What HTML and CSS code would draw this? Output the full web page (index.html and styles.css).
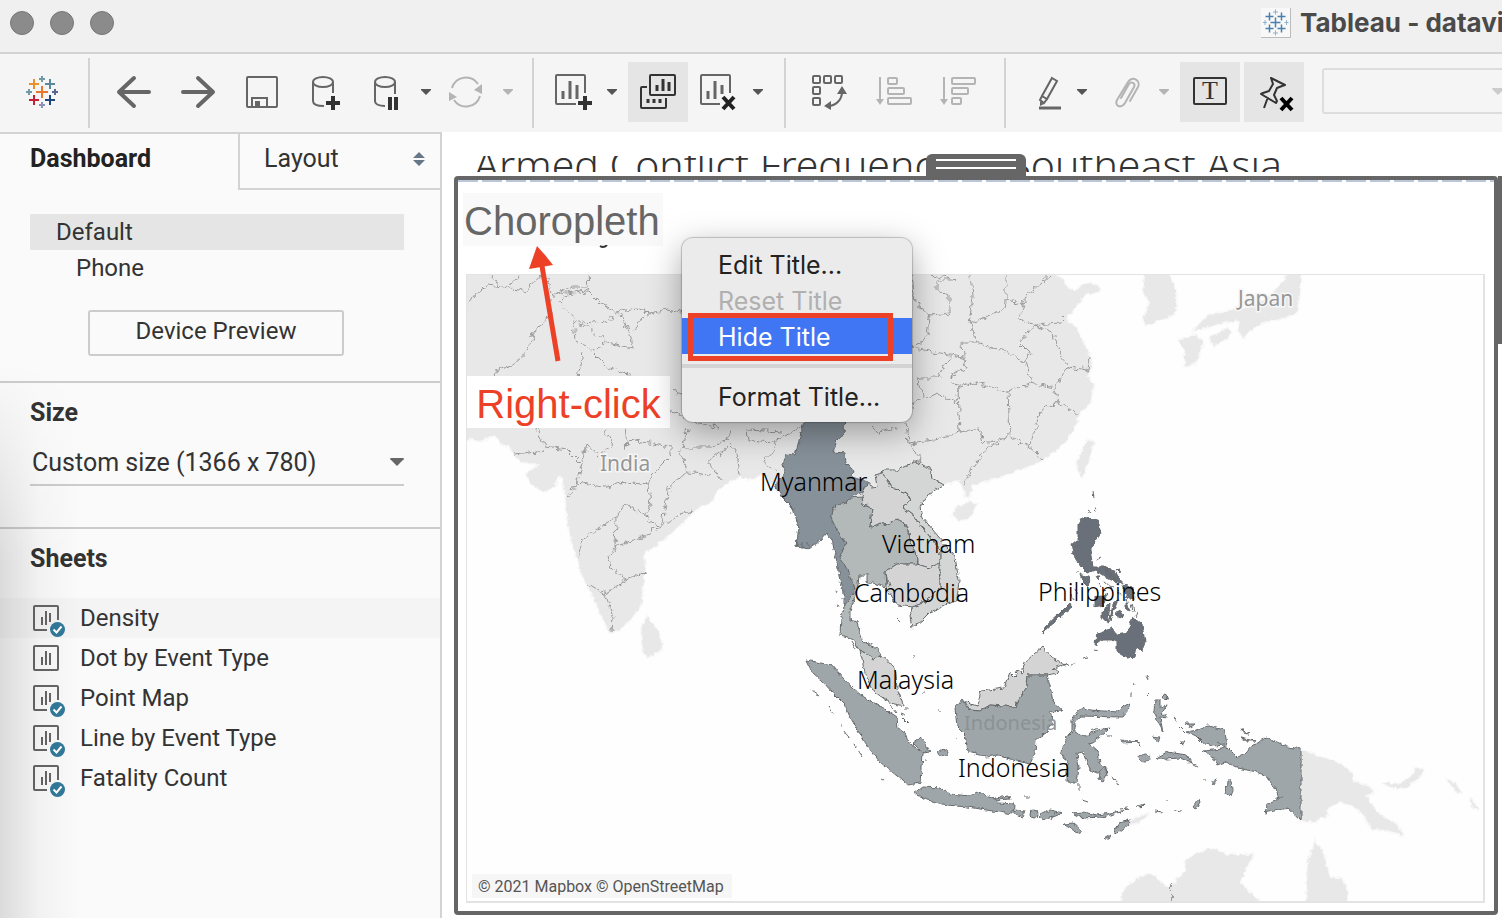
FILE: index.html
```html
<!DOCTYPE html>
<html lang="en">
<head>
<meta charset="utf-8">
<title>Tableau</title>
<link rel="stylesheet" href="styles.css">
</head>
<body>
<svg class="defs" aria-hidden="true">
  <symbol id="caret" viewBox="0 0 10 6"><path d="M0 0h10v1L5 6 0 1z" fill="currentColor"/></symbol>
  <symbol id="sheet" viewBox="0 0 34 34"><rect x="2" y="3" width="24" height="24" rx="1" fill="none" stroke="#666" stroke-width="2"/><path d="M10 14v8M14 8v14M18 10v12" stroke="#666" stroke-width="2"/></symbol>
  <symbol id="sheet-used" viewBox="0 0 34 34"><path d="M15 27H3a1 1 0 0 1-1-1V4a1 1 0 0 1 1-1h22a1 1 0 0 1 1 1v13" fill="none" stroke="#666" stroke-width="2"/><path d="M10 14v8M14 8v14M18 10v9" stroke="#666" stroke-width="2"/><circle cx="25.500" cy="26.500" r="7.500" fill="#32799a"/><path d="M21.500 26.500l3 3 5-6" fill="none" stroke="#fff" stroke-width="2"/></symbol>
</svg>

<header class="titlebar">
  <div class="lights"><i class="light"></i><i class="light"></i><i class="light"></i></div>
  <div class="window-title">
    <svg class="doc-icon" viewBox="0 0 30 30" fill="none" stroke="#4b80ae"><rect x="0" y="0" width="30" height="30" fill="#f8f8f8" stroke="none"/><path d="M29.500 0v29.500H0" stroke="#bbb"/><path d="M14.500 9.500v10M9.500 14.500h10M8.500 4.500v8M4.500 8.500h8M20.500 4.500v8M16.500 8.500h8M8.500 16.500v8M4.500 20.500h8M20.500 16.500v8M16.500 20.500h8" stroke-width="1.500"/><path d="M14.500 1.500v5M12 4h5M14.500 22.500v5M12 25h5M4 12v5M2 14.500h4M25.500 12v5M23.500 14.500h4" stroke="#8fb3cf"/></svg>
    <span>Tableau - datavi</span>
  </div>
</header>

<nav class="toolbar" aria-label="Toolbar">
  <div class="tools tools-logo">
    <a class="logo" href="#" aria-label="Start page">
      <svg width="32" height="34" viewBox="0 0 32 34" fill="none" stroke-width="2"><path d="M16 11v12M10 17h12" stroke="#e8762c"/><path d="M8 4v10M3 9h10" stroke="#eb912c"/><path d="M24 4v10M19 9h10" stroke="#59879b"/><path d="M8 20v10M3 25h10" stroke="#c72035"/><path d="M24 20v10M19 25h10" stroke="#1f457e"/><path d="M16 1v6M13 4h6M3 14v6M0 17h6" stroke="#7099a6"/><path d="M29 14v6M26 17h6" stroke="#5b6591"/><path d="M16 27v6M13 30h6" stroke="#8a92b8"/></svg>
    </a>
  </div>
  <div class="tools tools-data">
    <button class="tool" aria-label="Undo"><svg viewBox="0 0 60 60" fill="none" stroke="#666" stroke-width="4" stroke-linecap="round" stroke-linejoin="round"><path d="M30 16L15 30l15 14M15 30h30"/></svg></button>
    <button class="tool" aria-label="Redo"><svg viewBox="0 0 60 60" fill="none" stroke="#666" stroke-width="4" stroke-linecap="round" stroke-linejoin="round"><path d="M30 16l15 14-15 14M45 30H15"/></svg></button>
    <button class="tool" aria-label="Save"><svg viewBox="0 0 60 60" fill="none" stroke="#666" stroke-width="2"><rect x="15" y="15" width="30" height="30" rx="1"/><path d="M20 45v-9h15v9"/><path d="M23 39h5v5h-5z" fill="#666" stroke="none"/></svg></button>
    <button class="tool" aria-label="New data source"><svg viewBox="0 0 60 60" fill="none" stroke="#666" stroke-width="2"><ellipse cx="27" cy="20" rx="10" ry="5"/><path d="M17 20v19c0 3 4 5 11 5M37 20v11"/><path d="M37 34v14M30 41h14" stroke="#333" stroke-width="4"/></svg></button>
    <div class="split">
      <button class="tool-main" aria-label="Pause updates"><svg viewBox="0 0 54 60" fill="none" stroke="#666" stroke-width="2"><ellipse cx="25" cy="20" rx="10" ry="5"/><path d="M15 20v19c0 3 4 5 10 5M35 20v12"/><path d="M30 35v13M36 35v13" stroke="#333" stroke-width="4"/></svg></button>
      <button class="tool-caret" aria-label="Pause options"><svg><use href="#caret"/></svg></button>
    </div>
    <div class="split is-off">
      <button class="tool-main" aria-label="Refresh"><svg viewBox="0 0 54 60" fill="none" stroke="currentColor" stroke-width="2"><path d="M10 26a14.500 14.500 0 0 1 26-4M38 34a14.500 14.500 0 0 1-26 4"/><path d="M40 22v10l-8-4zM7 30l8 5-8 4z" fill="currentColor" stroke="none"/></svg></button>
      <button class="tool-caret" aria-label="Refresh options"><svg><use href="#caret"/></svg></button>
    </div>
  </div>
  <div class="tools tools-sheet">
    <div class="split">
      <button class="tool-main" aria-label="New worksheet"><svg viewBox="0 0 54 60" fill="none" stroke="#666" stroke-width="2"><path d="M30 42H11a1 1 0 0 1-1-1V14a1 1 0 0 1 1-1h27a1 1 0 0 1 1 1v17"/><path d="M17 29v8M24 19v18M31 23v14" stroke-width="3"/><path d="M39 34v14M32 41h14" stroke="#333" stroke-width="4"/></svg></button>
      <button class="tool-caret" aria-label="New options"><svg><use href="#caret"/></svg></button>
    </div>
    <button class="tool is-on" aria-label="Duplicate"><svg viewBox="0 0 60 60" fill="none" stroke="#333" stroke-width="2"><rect x="22" y="13" width="25" height="20" rx="1"/><path d="M19 25h-5a1 1 0 0 0-1 1v19a1 1 0 0 0 1 1h23a1 1 0 0 0 1-1v-9"/><path d="M29 23v6M35 17v12M41 20v9M20 37v4M26 37v4M32 37v4" stroke-width="3"/></svg></button>
    <div class="split">
      <button class="tool-main" aria-label="Clear sheet"><svg viewBox="0 0 54 60" fill="none" stroke="#666" stroke-width="2"><path d="M28 42H10a1 1 0 0 1-1-1V14a1 1 0 0 1 1-1h27a1 1 0 0 1 1 1v17"/><path d="M16 29v8M23 19v18M30 23v9" stroke-width="3"/><path d="M31 35l11 12M42 35L31 47" stroke="#222" stroke-width="4"/></svg></button>
      <button class="tool-caret" aria-label="Clear options"><svg><use href="#caret"/></svg></button>
    </div>
  </div>
  <div class="tools tools-sort">
    <button class="tool" aria-label="Swap rows and columns"><svg viewBox="0 0 60 60" fill="none" stroke="#666" stroke-width="2"><rect x="14" y="14" width="7" height="7" rx="1"/><rect x="25" y="14" width="7" height="7" rx="1"/><rect x="36" y="14" width="7" height="7" rx="1"/><rect x="14" y="25" width="7" height="7" rx="1"/><rect x="14" y="36" width="7" height="7" rx="1"/><path d="M43 30c0 7-5 13-13 14"/><path d="M38 32l5-8 5 8zM32 39v9l-7-4z" fill="#666" stroke="none"/></svg></button>
    <button class="tool is-off" aria-label="Sort ascending"><svg viewBox="0 0 60 60" fill="none" stroke="currentColor" stroke-width="2"><path d="M17 15v24"/><path d="M13 37h8l-4 6z" fill="currentColor" stroke="none"/><rect x="25" y="16" width="9" height="6" rx="1"/><rect x="25" y="26" width="16" height="6" rx="1"/><rect x="25" y="36" width="23" height="6" rx="1"/></svg></button>
    <button class="tool is-off" aria-label="Sort descending"><svg viewBox="0 0 60 60" fill="none" stroke="currentColor" stroke-width="2"><path d="M17 15v24"/><path d="M13 37h8l-4 6z" fill="currentColor" stroke="none"/><rect x="25" y="16" width="23" height="6" rx="1"/><rect x="25" y="26" width="16" height="6" rx="1"/><rect x="25" y="36" width="9" height="6" rx="1"/></svg></button>
  </div>
  <div class="tools tools-format">
    <div class="split">
      <button class="tool-main" aria-label="Highlight"><svg viewBox="-4 0 54 60" fill="none" stroke="#666" stroke-width="2"><path d="M32 16l5 3-10 18-5-3zM22 34l-2 4 4 3 3-4"/><path d="M20 39v5l4-2z" fill="#666" stroke="none"/><path d="M19 46h22" stroke-width="3"/></svg></button>
      <button class="tool-caret" aria-label="Highlight options"><svg><use href="#caret"/></svg></button>
    </div>
    <div class="split is-off">
      <button class="tool-main" aria-label="Group members"><svg viewBox="-2 0 54 60" fill="none" stroke="currentColor" stroke-width="2" stroke-linecap="round"><path d="M30 39l8-14c3-6-5-12-10-5l-11 18c-3 6 4 9 8 3l9-16c2-4-3-6-5-3l-8 14"/></svg></button>
      <button class="tool-caret" aria-label="Group options"><svg><use href="#caret"/></svg></button>
    </div>
    <button class="tool is-on" aria-label="Show mark labels"><svg viewBox="0 0 60 60" fill="none" stroke="#333" stroke-width="2"><rect x="14" y="16" width="32" height="26" rx="1"/><text class="t-glyph" x="30" y="37" text-anchor="middle">T</text></svg></button>
    <button class="tool is-on" aria-label="Fix axes"><svg viewBox="0 0 60 60" fill="none" stroke="#333" stroke-width="2" stroke-linejoin="round"><path d="M27 16l14 7-3 1-5 2-3 7 3 6-1 2-15-9 2-1 6-2 4-7-1-3zM24 35l-4 11"/><path d="M37 36l11 12M48 36L37 48" stroke="#000" stroke-width="4"/></svg></button>
  </div>
  <label class="fit"><select class="fit-select" aria-label="Fit" disabled><option></option></select><svg class="fit-caret"><use href="#caret"/></svg></label>
</nav>

<div class="workspace">
  <aside class="sidebar">
    <div class="tabs">
      <button class="tab tab-active">Dashboard</button>
      <button class="tab tab-layout">Layout <svg width="12" height="14" viewBox="0 0 12 14"><path d="M6 0l6 6H0zM6 14l6-6H0z" fill="#667788"/></svg></button>
    </div>
    <section class="devices">
      <button class="device device-on">Default</button>
      <button class="device device-sub">Phone</button>
      <button class="preview">Device Preview</button>
    </section>
    <section class="size">
      <h2 class="heading"><label for="size">Size</label></h2>
      <div class="size-field">
        <select id="size" class="size-select"><option>Custom size (1366 x 780)</option></select>
        <svg class="size-caret"><use href="#caret"/></svg>
      </div>
    </section>
    <section class="sheets">
      <h2 class="heading">Sheets</h2>
      <ul class="sheet-list">
        <li class="sheet sheet-hover"><svg class="sheet-icon"><use href="#sheet-used"/></svg>Density</li>
        <li class="sheet"><svg class="sheet-icon"><use href="#sheet"/></svg>Dot by Event Type</li>
        <li class="sheet"><svg class="sheet-icon"><use href="#sheet-used"/></svg>Point Map</li>
        <li class="sheet"><svg class="sheet-icon"><use href="#sheet-used"/></svg>Line by Event Type</li>
        <li class="sheet"><svg class="sheet-icon"><use href="#sheet-used"/></svg>Fatality Count</li>
      </ul>
    </section>
  </aside>

  <main class="canvas">
    <h1 class="dash-title"><span>Armed Conflict Frequency in Southeast Asia</span></h1>
    <section class="frame">
      <div class="grip"></div>
      <div class="scroll-thumb"></div>
      <header class="view-head"><h2 class="view-title">Choropleth</h2></header>
      <div class="map">
        <svg class="map-svg" viewBox="467 275 1016 626" preserveAspectRatio="xMinYMin slice" role="img" aria-label="Map of Southeast Asia">
          <defs>
            <filter id="rough" x="-2%" y="-2%" width="104%" height="104%"><feTurbulence type="fractalNoise" baseFrequency=".16" numOctaves="2" seed="4"/><feDisplacementMap in="SourceGraphic" scale="9" xChannelSelector="R" yChannelSelector="G"/></filter>
            <filter id="coast" x="-2%" y="-2%" width="104%" height="104%"><feTurbulence type="fractalNoise" baseFrequency=".2" numOctaves="2" seed="9"/><feDisplacementMap in="SourceGraphic" scale="5" xChannelSelector="R" yChannelSelector="G"/></filter>
          </defs>
          <rect x="467" y="275" width="1016" height="626" fill="#fefefe"/>
          <g class="land" filter="url(#coast)">
            <path d="M460 268V437L480 441 495 435 501 444 509 446 514 455 522 462 540 464 526 475 532 485 544 492 553 487 560 475 563 480 566 500 567 517 573 547 583 577 593 597 602 617 610 632 620 630 630 620 640 607 642 593 645 570 644 553 653 547 667 537 693 512 713 500 717 490 727 483 740 477 752 479 763 473 775 490 800 500 900 520 935 485 950 483 960 480 966 497 969 496 973 485 1010 473 1037 463 1060 447 1073 430 1079 415 1090 402 1094 385 1087 377 1092 368 1090 357 1081 338 1075 327 1066 318 1075 307 1085 295 1100 290 1098 286 1085 283 1075 292 1067 288 1063 280 1048 268z"/>
            <path d="M1088 440l6 3-6 20-6 14-6-12zM957 507l13-5 6 3-6 12-10 4-8-6zM1146 268h19l10 19v26l-10 5-19 7-3-5 7-17-7-11z"/>
            <path d="M1300 268v25l-4 20-11 5-20 4-15 8-6 7-6-5 2-12-17 3-19 5-10 2 14-15 19-4 21-3 21-11 16-17 3-10zM1179 340l15-5 9 7-7 21-11 4v-17zM1210 338l17-10 4 4-4 6-14 8z"/>
            <path d="M647 617l8 10 7 13-1 10-12 7-5-4-3-16 1-10z"/>
            <path d="M1301 750l37 13 14 10 1 9 17 5 3 6-8 2 8 12 9 10 13 6 8 12-16-5-14-1-16-22-17-5-15 8 3 5-13 6h-14zM1382 783l18 1 15-11v-5l8 2-5 8-11 9-14 1zM1448 780l6 3 8 10-8-4zM1470 798l9 12-6-3z"/>
            <path d="M1123 905l-1-13 11-10 17-9 13 12 10 2 4-9 10-6-2-10 8-7 19-7 15 7h26l-8 15-5 13 10 10 15 12zM1306 905l2-42 7-23 8 13 7 25h10l7 9v18zM1128 822l22-9-10 8-12 5z"/>
          </g>
          <g class="borders" filter="url(#rough)">
            <path d="M467 305L477 292 488 285 510 288 525 292 537 278 547 277M492 275L498 285M518 275L510 288M547 277L553 295 573 287 588 287 587 275M553 295L587 290 600 303 617 312 635 308 650 313 667 309 685 313M550 298V317L533 332 528 352 513 365 495 370 494 378M607 342L633 348 630 333 619 314M633 332L646 312M593 353L607 367 627 373 650 385 682 394M583 353L578 378M670 411L695 422 720 428M537 428L546 447 545 451 515 455M546 447L567 450 582 465 578 482 565 499M582 465L587 445 598 455 613 445 605 430M578 482L603 487 627 482 648 485M627 425L625 450 627 440 650 443 672 448V455L652 475 648 485 650 507 643 515 625 503 616 518 597 530 582 540 578 557M616 518L615 547 608 557 612 570 627 579 645 573M615 547L643 537 660 527 643 515M660 527L680 515 693 511M660 527L667 502 668 488 687 472 680 453 688 430M587 583L605 594 627 579M605 594L613 617 612 632M680 448L710 448 728 440 730 430M727 448L708 462 723 482M687 472L710 475M730 443L737 453 740 477M747 427L748 440 775 442 773 453 763 462 778 473M775 442L800 427M747 430L783 432"/>
            <path d="M971 275L973 297 969 323 977 342 962 342 963 357 950 355 913 348M1006 275V300L1005 310 969 323M1050 275L1025 297V303L1006 300M1025 303L1019 318 1035 325 1060 323 1066 317M1035 325L1020 342 1030 352 1025 362 1006 352 977 342M1035 325L1054 333 1060 357 1069 367 1088 370 1090 357M1025 362L1032 383 1054 388 1069 367M1032 383L1008 392 973 382 958 388 950 377 967 367 963 357M1054 388L1058 403 1079 415M1058 403L1042 410 1029 447 1043 459M1008 392L1010 437 1029 447M1010 437L987 447 963 483M958 388L960 432 979 428 983 443 1010 437M960 432L935 440 908 443 906 422M908 443L923 460 905 466M958 388L956 403 938 393 917 400 913 408M950 357L938 378 917 378 923 396M931 275L956 280 937 280V290L950 297V313L929 315 915 303 912 275M929 315L927 337 913 348M872 425L880 432 896 428"/>
            <path stroke-dasharray="4 2" d="M587 292L565 296 560 303 578 322 597 323 613 317M573 323L575 340 593 350 607 342 585 325z"/>
            <path d="M1170.500 883v20"/>
          </g>
          <g class="areas" filter="url(#coast)">
            <path class="c-mm" d="M806 415L845 415 844 432 837 440 833 452 845 453 846 463 853 470 852 477 868 482 862 492 850 498 847 503 835 505 831 518 837 530 846 543 840 557 848 570 855 592 848 603 844 612V593L837 563 832 540 826 533 820 540 808 549 796 546 799 528 793 508 783 498 775 485 785 473 783 463 787 454 795 455z"/>
            <path class="c-th" d="M835 505L847 503 850 498 862 497 863 505 872 508 870 528 880 523 888 525 897 519 903 522 909 532 910 540 918 560 917 564H897L885 572 886 587 873 583H868V575H859L858 585 855 598 850 610V620L857 622 863 642 877 648 882 655 873 659 868 655 860 650 852 638 840 635 841 617 845 605 855 592 848 570 840 557 846 543 837 530 831 518z"/>
            <path class="c-la" d="M868 482L872 487 877 486 875 475 882 473 888 480 892 488 907 493 911 500 902 507 913 515 927 533 940 550V563L930 568 918 565V560L910 540 909 532 903 522 897 519 888 525 880 523 870 528 872 508 863 505 862 492z"/>
            <path class="c-vn" d="M882 473L883 470H897L915 462 930 468 932 478 944 485 930 493 920 507 922 517 943 542 955 557 959 580 957 600 940 608 930 612 922 620 912 628 910 617 912 607 925 602 940 587V550L927 533 913 515 902 507 911 500 907 493 892 488 888 480z"/>
            <path class="c-la" d="M885 572L897 564H917L930 568 939 563 940 587 925 602 912 607 897 605 888 592z"/>
            <path class="c-la" d="M860 650L868 655 873 659 882 655 893 667 896 674 897 688 904 706 890 703 872 690 865 673zM962 702L968 703 977 706 981 691 1004 688 1010 672 1015 677 1018 670 1022 673 1025 662 1042 647 1052 658 1066 664 1053 668 1059 673 1047 675H1028L1027 687 1018 700 1015 707 990 705 980 711 970 710z"/>
            <g class="c-id">
              <path d="M962 699L970 710 980 711 990 705 1015 707 1018 700 1027 687 1028 675H1047L1050 685 1053 702 1063 711 1050 712 1053 722 1047 732 1036 740 1035 753 1030 764 1013 760 998 755 987 757 968 752 965 735 957 727 955 708z"/>
              <path d="M806 660L832 665 842 678 863 697 882 707 897 717 898 728 905 732 908 742 923 753 921 783 908 785 880 762 868 747 850 717 845 705 833 693 823 682 812 672zM913 743l7-5 5 4 5 10-7 1z"/>
              <path d="M914 793L922 787 940 788 950 794 970 796 977 792 993 797 998 803 1014 804 1013 814 993 811 967 807 947 805 927 800zM995 798l14-2 1 3-14 1zM1014 810l11 1-3 6-7-3zM1040 815l10-5 13 3-10 4-11 3zM1072 813l11-1 14 3 31-5-25 7-21 1zM1063 824l10-1 9 8-4 2zM1129 819l-1 6-10 8-5-1 7-10zM1105 839l6-4-2 4z"/>
              <path d="M1072 732V720L1077 712 1083 707 1090 710 1118 712 1125 705 1130 703 1128 710 1122 717 1080 716 1075 723V732L1085 737 1097 730 1110 728 1105 733 1093 742 1088 743 1098 752 1100 763 1108 772 1097 773 1090 770 1085 758 1083 752 1077 753 1079 767 1077 782H1067V763L1061 753 1067 737z"/>
              <path d="M1155 700h5v7l7-2-5 8 6 5-8-1 3 15-6-12-3-10zM1120 740l20 2-18 1zM1156 758l11-6 20 3 5 8-12-5-14 1zM1152 737l8 1-2 3zM1185 724l10 0-4 3zM1241 729l8 5-6-1zM1240 738l16 3-10 0zM1227 780l3 0 3 8-3 8-4-2zM1193 807l6-8 1 3-4 7zM1137 806l8-2-4 4zM1180 742l6 0-4 2zM1100 772l4-5 3 7-4 7-4-2z"/>
              <path d="M1187 732L1197 730 1208 726 1225 730 1227 747 1237 757 1245 753 1252 745 1258 744 1266 737 1288 747 1301 749V820L1288 808 1265 813 1268 804 1278 800 1275 788 1268 778 1257 772 1237 768 1225 762 1217 765 1213 757 1203 751 1222 749 1225 745 1213 746 1203 743 1197 737z"/>
              <path d="M811 690l8 5M828 706l6 8M845 732l4 6M854 744l2 3M858 750l4 6M841 724v2M1146 696l3-3M1079 784v7M884 708l6 6M890 705l6 8M904 709h5M903 718l6 6M900 713l5 2M1024 797h6M1082 800l6 2M1113 777l5 8M1092 731l5-3M1106 736h6M1138 741l2 6M1211 781l3 4 2-6M1204 780h2M1217 742l4 2M1120 809l8-1M1155 811l7 1M1175 811l7 1M1167 799v1M1185 760l12 6M1133 683l1 2M1132 690v8M1146 675l2 4M1174 718l4 3M1179 727l6 6M1276 798h7M1080 817l7 1M1030 810l5 3M1051 820l4-8"/>
              <ellipse cx="943" cy="753" rx="5" ry="3.500"/><ellipse cx="1034" cy="814" rx="4" ry="4"/><ellipse cx="1145" cy="758" rx="6" ry="4"/><ellipse cx="1165" cy="697" rx="3" ry="3"/>
            </g>
            <path class="c-ph" d="M1082 517L1098 520 1101 533 1090 550 1093 567 1105 567 1113 577 1118 583 1107 578 1095 570 1087 573 1081 567 1075 558 1072 545 1078 540V523zM1080 574l10 4-2 9-5-5zM1122 585l11 2 1 13-7-3zM1126 598l4 14-4-3zM1095 597l13-2-5 10-8 2zM1101 613l9-10-2 19-7-4zM1118 600l-8 20 3-16zM1115 614l4-3 5 3-5 3zM1095 645L1097 633 1112 628 1117 635 1127 633 1133 617 1142 625 1145 642 1142 652 1137 647 1135 657 1127 658 1117 652V642L1112 640 1102 640zM1043 633L1045 627 1060 613 1070 603 1072 607 1060 617zM1105 568l8 1 6 9 5 6-8-3-8-7zM1116 570l4-1-1 4zM1096 576l4 0-2 3zM1103 581l10 9M1072 595l2 5M1075 589l1 4M1093 492l1 5M1088 510l4 3M1095 507l1 4M1076 572l3 0M1096 560l4-2M1138 612l-2 5M1062 667l6-2M1071 665l4-3M1082 658l6-1M1094 650l4 1M1104 590l6 6M1118 590l3 6M1041 643l2 2M1115 577l4 3M1131 604l2 8M1134 608l1 4M1099 583l3 4M1110 586l4 2"/>
            <path class="specks" d="M836 575l1 1M839 582l2 3M836 590l1 2M840 597l2 3M838 605l1 2M842 588l1 2M788 502l4 6M790 512l3 2M797 540v7M802 543v6M808 543v5M851 641l4 7M858 645v4M896 618l4 4M937 610l3-2M888 580l2 6M925 760h1M913 656h1M923 692h2M939 711h1M882 779l2 1M956 738h1"/>
          </g>
          <g class="base-label"><text x="600" y="471">India</text><text x="1238" y="306">Japan</text></g>
          <text class="base-faint" x="964" y="730">Indonesia</text>
          <g class="label"><text x="760" y="491">Myanmar</text><text x="882" y="553">Vietnam</text><text x="854" y="602">Cambodia</text><text x="857" y="689">Malaysia</text><text x="1038" y="601">Philippines</text><text x="958" y="777">Indonesia</text></g>
        </svg>
        <small class="credit">© 2021 Mapbox © OpenStreetMap</small>
      </div>

      <svg class="arrow" width="40" height="116" viewBox="0 0 40 116"><path d="M17 20l16 95" stroke="#ed4127" stroke-width="5"/><path d="M12 0L4 23l24-4-8-10z" fill="#ed4127"/></svg>
      <svg class="descender" width="10" height="4" viewBox="0 0 10 4"><path d="M1 1c3 2 5 1 7-1" fill="none" stroke="#333" stroke-width="2"/></svg>
      <div class="callout">Right-click</div>

      <div class="menu" role="menu">
        <button class="item" role="menuitem">Edit Title...</button>
        <button class="item" role="menuitem" disabled>Reset Title</button>
        <button class="item item-on" role="menuitem">Hide Title</button>
        <hr class="rule">
        <button class="item" role="menuitem">Format Title...</button>
        <div class="marker"></div>
      </div>
    </section>
  </main>
</div>
</body>
</html>
```
FILE: styles.css
```css
* { box-sizing: border-box; }
body {
  margin: 0;
  height: 100vh;
  display: flex;
  flex-direction: column;
  overflow: hidden;
  background: #fff;
  color: #333;
  font: 24px/36px Roboto, sans-serif;
}
button, select { font: inherit; color: inherit; border: 0; background: none; padding: 0; margin: 0; text-align: left; }
h1, h2, ul { margin: 0; padding: 0; }
.defs { position: absolute; width: 0; height: 0; }

/* title bar */
.titlebar {
  flex: none;
  height: 54px;
  display: flex;
  align-items: center;
  padding: 0 0 6px 10px;
  background: #f0f0f0;
  border-bottom: 2px solid #d3d3d3;
}
.lights { display: flex; gap: 16px; }
.light { width: 24px; height: 24px; border-radius: 50%; background: #8b8b8b; border: 1px solid #777; }
.window-title {
  margin-left: auto;
  width: 241px;
  display: flex;
  align-items: center;
  gap: 9px;
  overflow: hidden;
  white-space: nowrap;
  font: 700 26px/36px Inter, sans-serif;
  color: #4a4a4a;
}
.doc-icon { flex: none; width: 30px; height: 30px; }

/* toolbar */
.toolbar {
  flex: none;
  height: 78px;
  display: flex;
  padding: 4px 0;
  overflow: hidden;
  background: #f5f5f5;
}
.tools { flex: none; display: flex; gap: 4px; padding-top: 4px; border-right: 2px solid #d3d3d3; }
.tools-logo { padding-left: 26px; padding-right: 30px; }
.tools-data { padding-left: 14px; padding-right: 12px; }
.tools-sheet { padding-left: 12px; padding-right: 14px; }
.tools-sort { padding-left: 13px; padding-right: 17px; }
.tools-format { padding-left: 10px; border-right: 0; }
.logo { display: block; padding-top: 13px; }
.tool, .tool-main { width: 60px; height: 60px; }
.tool-main { width: 54px; }
.tool svg, .tool-main svg { display: block; width: 100%; height: 60px; }
.split { display: flex; width: 78px; height: 60px; color: #555; }
.tool-caret { width: 24px; height: 60px; display: flex; align-items: center; justify-content: center; }
.tool-caret svg { width: 10px; height: 6px; }
.is-on { background: #e5e5e5; }
.is-off { color: #b4b4b4; }
.t-glyph { font: 26px "Liberation Serif", serif; fill: #333; stroke: none; }
.fit { position: relative; flex: none; width: 200px; height: 46px; margin: 10px 0 0 18px; }
.fit-select { appearance: none; width: 100%; height: 46px; border: 2px solid #d3d3d3; border-radius: 3px; background: #f5f5f5; display: block; }
.fit-caret { position: absolute; left: 170px; top: 20px; width: 12px; height: 7px; color: #ccc; }

/* side bar */
.workspace { flex: 1; min-height: 0; display: flex; }
.sidebar {
  position: relative;
  flex: none;
  width: 442px;
  background: #fafafa;
  border-top: 2px solid #d3d3d3;
  border-right: 2px solid #d3d3d3;
}
.sidebar::after {
  content: "";
  position: absolute;
  inset: 230px auto 0 0;
  width: 80px;
  pointer-events: none;
  background: linear-gradient(to right, rgba(0,0,0,.12), rgba(0,0,0,.03) 50%, transparent);
  mask-image: linear-gradient(to bottom, transparent, #000 200px);
}
.tabs { display: flex; height: 56px; font-size: 25px; }
.tab { flex: none; height: 56px; }
.tab-active { width: 238px; padding: 0 0 6px 30px; font-weight: 700; color: #222; }
.tab-layout {
  flex: 1;
  display: flex;
  align-items: center;
  justify-content: space-between;
  padding: 0 15px 4px 24px;
  border-left: 2px solid #d3d3d3;
  border-bottom: 2px solid #d3d3d3;
}
.devices { display: flex; flex-direction: column; padding: 24px 36px 25px 30px; border-bottom: 2px solid #ccc; }
.device { height: 36px; padding-left: 26px; }
.device-sub { padding-left: 46px; }
.device-on { background: #e5e5e5; }
.preview { width: 256px; height: 46px; margin: 24px 0 0 58px; border: 2px solid #ccc; border-radius: 3px; text-align: center; line-height: 38px; padding-bottom: 4px; }
.heading { font-size: 25px; line-height: 36px; font-weight: 700; }
.size { padding: 12px 36px 41px 30px; border-bottom: 2px solid #ccc; }
.size-field { position: relative; margin-top: 10px; border-bottom: 2px solid #ccc; }
.size-select { appearance: none; display: block; width: 100%; height: 43px; padding: 0 20px 0 2px; font-size: 25px; }
.size-caret { position: absolute; right: 0; top: 17px; width: 14px; height: 8px; color: #666; pointer-events: none; }
.sheets { padding-top: 12px; }
.sheets .heading { padding-left: 30px; }
.sheet-list { list-style: none; margin-top: 21px; }
.sheet { display: flex; align-items: center; gap: 14px; height: 40px; padding-left: 32px; }
.sheet-hover { background: #f4f4f4; }
.sheet-icon { width: 34px; height: 34px; margin-top: 4px; }

/* dashboard canvas */
.canvas { flex: 1; min-width: 0; display: flex; flex-direction: column; padding: 24px 4px 3px 12px; }
.dash-title {
  flex: none;
  height: 16px;
  margin: 0 0 4px 20px;
  overflow: hidden;
  display: flex;
  align-items: center;
  white-space: nowrap;
  font: 300 41px/20px "Noto Sans", sans-serif;
}
.frame {
  position: relative;
  flex: 1;
  min-height: 0;
  display: flex;
  flex-direction: column;
  padding: 0 9px 8px 8px;
  border: 4px solid #666;
  border-radius: 4px;
}
.frame::before {
  content: "";
  position: absolute;
  inset: 0 0 auto 0;
  height: 2px;
  background: repeating-linear-gradient(to right, #bac6da 0 20px, #fff 20px 24px);
}
.grip {
  position: absolute;
  left: 468px;
  top: -26px;
  width: 100px;
  height: 26px;
  border-radius: 6px 6px 0 0;
  background: linear-gradient(#fff 0 2px, transparent 2px 8px, #fff 8px 10px, transparent 10px) 10px 5px / 80px 12px no-repeat #666;
}
.scroll-thumb { position: absolute; right: -8px; top: -4px; width: 4px; height: 168px; background: #666; }
.view-head { flex: none; height: 94px; padding-top: 13px; }
.view-title {
  width: 200px;
  height: 53px;
  margin-left: -3px;
  padding-left: 1px;
  background: #f9f9f9;
  color: #666;
  font: 400 40px/56px "Liberation Sans", sans-serif;
}
.map { position: relative; flex: 1; min-height: 0; border: solid #e3e3e3; border-width: 1px 2px 2px 1px; overflow: hidden; }
.map-svg { display: block; width: 100%; height: 100%; }
.land { fill: #e8e8e8; stroke: #f8f8f8; stroke-width: 3; paint-order: stroke; }
.borders { fill: none; stroke: #999; stroke-width: 1; }
.areas { stroke: #666a6c; stroke-width: 1; stroke-linejoin: round; }
.c-mm { fill: #87919a; }
.c-th { fill: #b3b8b8; }
.c-la { fill: #d4d4d4; }
.c-vn { fill: #d3d6d5; }
.c-id { fill: #9fa6aa; }
.c-ph { fill: #69707a; }
.specks { fill: none; }
.label { font: 25px "Noto Sans", sans-serif; font-weight: 300; fill: #000; }
.base-label { font: 21px "Noto Sans", sans-serif; fill: #969696; stroke: #f6f6f6; stroke-width: 3; paint-order: stroke; }
.base-faint { font: 20px "Noto Sans", sans-serif; fill: #8b9296; }
.credit {
  position: absolute;
  left: 5px;
  bottom: 3px;
  height: 24px;
  padding: 0 8px 0 6px;
  background: #f6f6f6;
  color: #555;
  font: 16px/26px Roboto, sans-serif;
}

/* annotations */
.arrow { position: absolute; left: 67px; top: 66px; }
.descender { position: absolute; left: 141px; top: 65px; }
.callout {
  position: absolute;
  left: 9px;
  top: 196px;
  width: 203px;
  height: 52px;
  background: #fff;
  color: #ed4127;
  text-align: center;
  font: 40px/56px "Liberation Sans", sans-serif;
}

/* context menu */
.menu {
  position: absolute;
  left: 224px;
  top: 58px;
  width: 230px;
  display: flex;
  flex-direction: column;
  padding: 8px 0;
  border-radius: 11px;
  background: #ebebeb;
  box-shadow: 0 0 1px 1px rgba(0,0,0,.2), 0 10px 34px rgba(0,0,0,.35);
  color: #222;
  font: 25px/36px Inter, sans-serif;
}
.item { height: 36px; padding: 2px 0 0 36px; line-height: 34px; }
.item:disabled { color: #b0b0b0; }
.item-on { background: #4076f3; color: #fff; }
.rule { width: 100%; height: 4px; margin: 10px 0; border: 0; background: #d3d3d3; }
.marker { position: absolute; left: 6px; top: 75px; width: 205px; height: 48px; border: 5px solid #ed4127; pointer-events: none; }
```
